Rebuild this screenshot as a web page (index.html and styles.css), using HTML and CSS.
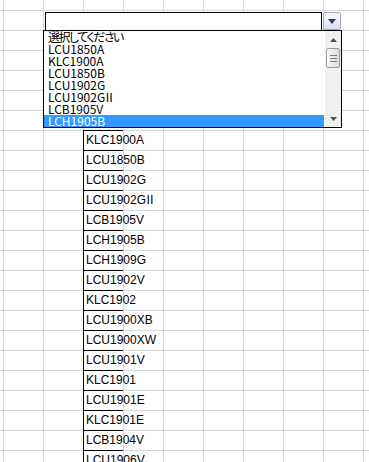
FILE: index.html
```html
<!DOCTYPE html>
<html lang="ja">
<head>
    <meta charset="UTF-8">
    <meta name="viewport" content="width=device-width, initial-scale=1.0">
    <title>品番選択</title>
    <link rel="stylesheet" href="styles.css">
</head>
<body>
    <div class="sheet">
        <div class="cells">
            <div class="cell">KLC1900A</div>
            <div class="cell">LCU1850B</div>
            <div class="cell">LCU1902G</div>
            <div class="cell">LCU1902G<span class="roman">Ⅱ</span></div>
            <div class="cell">LCB1905V</div>
            <div class="cell">LCH1905B</div>
            <div class="cell">LCH1909G</div>
            <div class="cell">LCU1902V</div>
            <div class="cell">KLC1902</div>
            <div class="cell">LCU1900XB</div>
            <div class="cell">LCU1900XW</div>
            <div class="cell">LCU1901V</div>
            <div class="cell">KLC1901</div>
            <div class="cell">LCU1901E</div>
            <div class="cell">KLC1901E</div>
            <div class="cell">LCB1904V</div>
            <div class="cell">LCU1906V</div>
        </div>
    </div>

    <div class="combo"></div>
    <div class="combo-btn">
        <svg width="8" height="5" viewBox="0 0 8 5"><path d="M0 0H8L4 5Z" fill="#29356b"/></svg>
    </div>

    <div class="list">
        <ul class="items">
            <li class="jp">選択してください</li>
            <li>LCU1850A</li>
            <li>KLC1900A</li>
            <li>LCU1850B</li>
            <li>LCU1902G</li>
            <li>LCU1902G<span class="roman">Ⅱ</span></li>
            <li>LCB1905V</li>
            <li class="selected">LCH1905B</li>
        </ul>
        <div class="scroll">
            <div class="arrow">
                <svg width="7" height="4" viewBox="0 0 7 4"><path d="M3.5 0L7 4H0Z" fill="#505050"/></svg>
            </div>
            <div class="thumb">
                <span></span><span></span><span></span>
            </div>
            <div class="track"></div>
            <div class="arrow">
                <svg width="7" height="4" viewBox="0 0 7 4"><path d="M0 0H7L3.5 4Z" fill="#505050"/></svg>
            </div>
        </div>
    </div>
</body>
</html>
```

FILE: styles.css
```css
body {
    margin: 0;
    width: 369px;
    height: 462px;
    overflow: hidden;
    font-family: "Liberation Sans", Arial, sans-serif;
    position: relative;
}
.sheet {
    height: 462px;
    box-sizing: border-box;
    padding: 130px 0 0 83px;
    background-color: #fff;
    background-image:
        linear-gradient(to right, #d3d8dc 1px, transparent 1px),
        linear-gradient(to bottom, #d3d8dc 1px, transparent 1px);
    background-size: 40px 20px;
    background-position: 3px 10px;
}
.cells {
    width: 40px;
    border-top: 1px solid #000;
}
.cell {
    height: 19px;
    line-height: 19px;
    box-sizing: content-box;
    width: 37px;
    padding-left: 2px;
    border-left: 1px solid #000;
    border-bottom: 1px solid #000;
    font-size: 12px;
    color: #000;
    white-space: nowrap;
}
.roman {
    font-family: "Noto Sans CJK JP", sans-serif;
    font-feature-settings: "palt";
    line-height: 0;
    margin-left: -2px;
}

.combo {
    position: absolute;
    left: 45px;
    top: 12px;
    width: 277px;
    height: 19px;
    box-sizing: border-box;
    border: 1px solid #000;
    background: #fff;
}
.combo-btn {
    position: absolute;
    left: 323px;
    top: 12px;
    width: 18px;
    height: 18px;
    box-sizing: border-box;
    border: 1px solid #a3abb9;
    border-radius: 2px;
    background: linear-gradient(to bottom, #f7f8fa, #dde1e8);
    display: flex;
    align-items: center;
    justify-content: center;
}

.list {
    position: absolute;
    left: 43px;
    top: 30px;
    width: 299px;
    height: 98px;
    box-sizing: border-box;
    border: 1px solid #000;
    background: #fff;
    display: flex;
}
.items {
    list-style: none;
    margin: 0;
    padding: 0 1px 0 0;
    flex: 1;
    font-family: "Noto Sans CJK JP", sans-serif;
    font-size: 12px;
}
.items li {
    height: 12px;
    line-height: 12px;
    padding-left: 4px;
    white-space: nowrap;
    color: #000;
}
.items .jp {
    font-feature-settings: "palt";
    letter-spacing: -1.5px;
}
.items .selected {
    background: #3399ff;
    color: #fff;
}
.scroll {
    width: 16px;
    background: #f0f0f0;
    display: flex;
    flex-direction: column;
}
.arrow {
    height: 17px;
    display: flex;
    align-items: center;
    justify-content: center;
}
.thumb {
    height: 20px;
    margin: 0 1px;
    box-sizing: border-box;
    border: 1px solid #979ca3;
    border-radius: 2px;
    background: linear-gradient(to right, #f8f8f8, #dadada);
    display: flex;
    flex-direction: column;
    align-items: center;
    justify-content: center;
    gap: 2px;
}
.thumb span {
    width: 7px;
    height: 1px;
    background: #7a7a7a;
}
.track {
    flex: 1;
}
```
